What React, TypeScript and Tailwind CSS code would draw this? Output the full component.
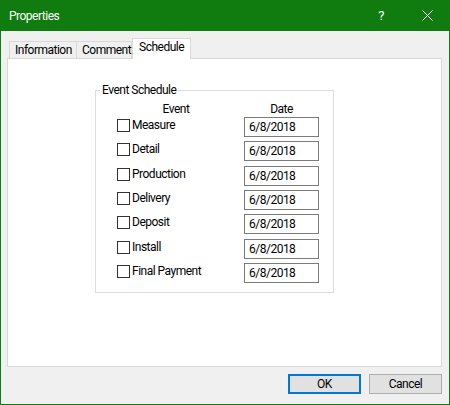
import React from "react";

const events = ["Measure", "Detail", "Production", "Delivery", "Deposit", "Install", "Final Payment"];

const App = () => {
  return (
    <div
      className="w-[450px] h-[405px] flex flex-col border-x border-b border-[#107c10] bg-[#f0f0f0] text-[12px] tracking-[-0.5px] text-black whitespace-nowrap"
      style={{ fontFamily: 'Roboto, "Liberation Sans", sans-serif' }}
    >
      {/* title bar */}
      <div className="h-[31px] shrink-0 bg-[#107c10] text-white flex items-center -mx-px">
        <div className="pl-[9px] leading-[16px]">Properties</div>
        <div className="ml-auto flex h-full">
          <div className="w-[46px] h-full flex items-center justify-center text-[13px]">?</div>
          <div className="w-[46px] h-full flex items-center justify-center">
            <svg width="11" height="11" viewBox="0 0 11 11">
              <path d="M0.5 0.5 L10.5 10.5 M10.5 0.5 L0.5 10.5" stroke="white" strokeWidth="1" />
            </svg>
          </div>
        </div>
      </div>

      <div className="flex-1 flex flex-col pt-[7px] pl-[6px] pr-[7px]">
        {/* tabs */}
        <div className="flex items-end h-[20px] pl-[2px] relative z-10">
          <div className="w-[68px] h-[17px] border border-b-0 border-[#d9d9d9] bg-[#f0f0f0] pl-[5px] leading-[17px]">
            Information
          </div>
          <div className="w-[55px] h-[17px] border border-b-0 border-l-0 border-[#d9d9d9] bg-[#f0f0f0] pl-[5px] leading-[17px]">
            Comment
          </div>
          <div className="w-[59px] h-[21px] -mb-px border border-b-0 border-[#d9d9d9] bg-white pl-[6px] leading-[17px]">
            Schedule
          </div>
        </div>

        {/* panel */}
        <div className="h-[309px] border border-[#d9d9d9] bg-white pt-[31px] pl-[87px]">
          <div className="relative w-[239px] h-[203px] border border-[#dcdcdc] pt-[10px] pl-[21px]">
            <span className="absolute -top-[9px] left-[4px] bg-white px-[2px] leading-[16px]">Event Schedule</span>
            <div className="grid grid-cols-[118px_75px] gap-x-[9px] auto-rows-[24.33px] grid-rows-[16px]">
              <div className="text-center leading-[16px]">Event</div>
              <div className="text-center leading-[16px]">Date</div>
              {events.map((ev) => (
                <React.Fragment key={ev}>
                  <div className="flex items-start">
                    <div className="w-[13px] h-[13px] mt-[2px] border border-[#333333] bg-white shrink-0" />
                    <span className="ml-[2px] leading-[16px]">{ev}</span>
                  </div>
                  <div className="h-[20px] border border-[#7a7a7a] bg-white pl-[4px] flex items-center leading-[16px]">
                    6/8/2018
                  </div>
                </React.Fragment>
              ))}
            </div>
          </div>
        </div>

        {/* buttons */}
        <div className="flex justify-end gap-[8px] mt-[7px]">
          <button className="w-[73px] h-[20px] border-2 border-[#0078d7] bg-[#e1e1e1] leading-[16px]">OK</button>
          <button className="w-[73px] h-[20px] border border-[#adadad] bg-[#e1e1e1] leading-[16px]">Cancel</button>
        </div>
      </div>
    </div>
  );
};

export default App;
